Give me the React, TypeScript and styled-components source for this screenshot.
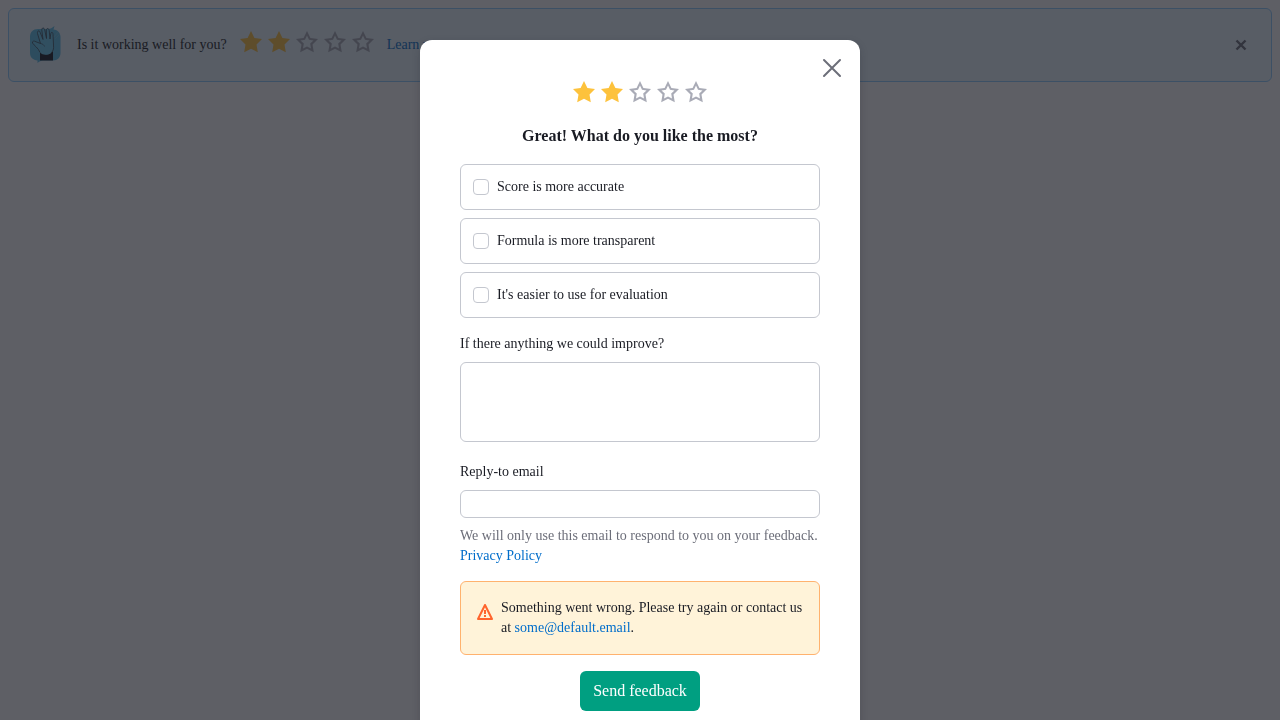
import React, { useState } from 'react';
import styled, { createGlobalStyle } from 'styled-components';

const GlobalStyle = createGlobalStyle`
  *, *::before, *::after { box-sizing: border-box; }
  body {
    margin: 8px;
    background: #ffffff;
    color: #191b23;
    font-family: "Liberation Serif", "Times New Roman", serif;
    font-size: 14px;
    line-height: 20px;
  }
`;

const Banner = styled.section`
  display: flex;
  align-items: center;
  padding: 16px;
  border: 1px solid #8ecdff;
  border-radius: 6px;
  background: #e9f7ff;
`;

const BannerContent = styled.div`
  display: flex;
  flex: 1;
  align-items: center;
  gap: 12px;
  min-width: 0;
`;

const BannerStars = styled.div`
  padding-bottom: 6px;
`;

const IconButton = styled.button`
  display: flex;
  padding: 0;
  border: 0;
  background: none;
  color: #6c6e79;
  cursor: pointer;
`;

const BannerClose = styled(IconButton)`
  padding: 0 6px;
`;

const Link = styled.a`
  color: #006dca;
  text-decoration: none;
  &:hover { text-decoration: underline; }
`;

const Overlay = styled.div`
  position: fixed;
  inset: 0;
  display: flex;
  justify-content: center;
  align-items: flex-start;
  padding: 40px;
  overflow: auto;
  scrollbar-width: none;
  background: rgba(25, 27, 35, 0.7);
`;

const Dialog = styled.div`
  position: relative;
  width: 100%;
  max-width: 440px;
  padding: 40px;
  border-radius: 12px;
  background: #ffffff;
  box-shadow: 0 3px 8px rgba(25, 27, 35, 0.2);
`;

const DialogClose = styled(IconButton)`
  position: absolute;
  top: 16px;
  right: 16px;
`;

const Form = styled.form`
  display: flex;
  flex-direction: column;
`;

const StarRow = styled.div`
  display: flex;
  justify-content: center;
  gap: 4px;
`;

const StarButton = styled(IconButton)<{ $filled: boolean }>`
  color: ${(p) => (p.$filled ? '#fdc23c' : '#a9abb6')};
`;

const Title = styled.h2`
  margin: 20px 0 16px;
  font-size: 16px;
  line-height: 24px;
  text-align: center;
`;

const Options = styled.div`
  display: grid;
  gap: 8px;
  margin-bottom: 16px;
`;

const Option = styled.label`
  display: flex;
  align-items: center;
  gap: 8px;
  min-height: 46px;
  padding: 12px;
  border: 1px solid #c4c7cf;
  border-radius: 6px;
  cursor: pointer;
`;

const Checkbox = styled.input`
  appearance: none;
  width: 16px;
  height: 16px;
  margin: 0;
  border: 1px solid #c4c7cf;
  border-radius: 4px;
  background: #ffffff;
  &:checked { background: #008ff8; border-color: #008ff8; }
`;

const FieldLabel = styled.label`
  margin-bottom: 8px;
`;

const TextArea = styled.textarea`
  display: block;
  width: 100%;
  height: 80px;
  margin-bottom: 20px;
  padding: 8px;
  border: 1px solid #c4c7cf;
  border-radius: 6px;
  background: #ffffff;
  font: inherit;
  resize: none;
`;

const TextInput = styled.input`
  width: 100%;
  height: 28px;
  margin-bottom: 8px;
  padding: 0 8px;
  border: 1px solid #c4c7cf;
  border-radius: 6px;
  background: #ffffff;
  font: inherit;
`;

const Hint = styled.p`
  margin: 0 0 15px;
  color: #6c6e79;
`;

const Warning = styled.div`
  display: flex;
  align-items: flex-start;
  gap: 8px;
  margin-bottom: 16px;
  padding: 16px;
  border: 1px solid #ffb26e;
  border-radius: 6px;
  background: #fff3d9;
`;

const WarningIcon = styled.svg`
  flex: none;
  margin-top: 6px;
`;

const WarningText = styled.p`
  margin: 0;
`;

const Submit = styled.button`
  align-self: center;
  height: 40px;
  padding: 0 13px;
  border: 0;
  border-radius: 6px;
  background: #009f81;
  color: #ffffff;
  font-family: inherit;
  font-size: 16px;
  line-height: 24px;
  cursor: pointer;
`;

const STAR = 'M12 1 15.4 7.900 23 9 17.500 14.400 18.800 22.300 12 18.700 5.200 22.300 6.500 14.400 1 9 8.600 7.900Z';
const STAR_HOLE = 'M12 5.500 14 9.700 18.500 10.400 15.200 13.600 16 18.500 12 16.400 8 18.500 8.800 13.600 5.500 10.400 10 9.700Z';

function Stars({ value, onChange }: { value: number; onChange: (n: number) => void }) {
  return (
    <StarRow role="group" aria-label="Rating">
      {[1, 2, 3, 4, 5].map((n) => (
        <StarButton key={n} type="button" $filled={n <= value} aria-label={`${n} of 5`} onClick={() => onChange(n)}>
          <svg width="24" height="24" viewBox="0 0 24 24" fill="currentColor" fillRule="evenodd" aria-hidden="true">
            <path d={n <= value ? STAR : STAR + STAR_HOLE} />
          </svg>
        </StarButton>
      ))}
    </StarRow>
  );
}

function HandIcon() {
  return (
    <svg width="40" height="40" viewBox="0 0 40 40" fill="none" aria-hidden="true">
      <path d="M13 4H23C25.500 4 27 3 29.500 1L28.500 4.500C33 5 35.500 8 35.500 12V28C35.500 32.500 32.500 35.500 28 35.500H18C16 35.500 14 36.500 12.500 38V35.500C8 35 5 32.500 5 28V12C5 7 8 4 13 4Z" fill="#5cc0e8" />
      <path d="M15 26.500C19 30.500 25 30.500 28 26V35.500H15Z" fill="#171a22" />
      <path d="M15 27.500C13.500 23 9 20.500 7.500 18C7 16 9 15.500 11 16.800L15.500 18.500L12.500 8.500C12 5.800 14.300 4.800 15.200 7.500L18 14.500L16.800 5C16.800 2.500 19 2.200 19.700 4.800L21.500 13.500L21.300 5C21.700 2.800 24 3.300 24.200 5.500L25 14L25.800 8.500C26.500 6.500 28 7.300 28 9.500L28.500 20C29 24 28 26.500 25.500 28.500C21.500 30.500 17.500 30 15 27.500Z" fill="#68c9ef" />
      <path d="M15 27.500C13.500 23 9 20.500 7.500 18C7 16 9 15.500 11 16.800L15.500 18.500L12.500 8.500C12 5.800 14.300 4.800 15.200 7.500L18 14.500L16.800 5C16.800 2.500 19 2.200 19.700 4.800L21.500 13.500L21.300 5C21.700 2.800 24 3.300 24.200 5.500L25 14L25.800 8.500C26.500 6.500 28 7.300 28 9.500L28.500 20C29 24 28 26.500 25.500 28.500" stroke="#3b4652" strokeWidth=".8" strokeLinejoin="round" />
      <path d="M15.500 18.500C17.800 18.800 19 20 19.500 21.500" stroke="#3b4652" strokeWidth=".6" />
      <path d="M29 12 33 7M30 14 35 9" stroke="#8ac4dd" strokeWidth=".6" />
    </svg>
  );
}

const reasons = ['Score is more accurate', 'Formula is more transparent', "It's easier to use for evaluation"];

export default function App() {
  const [rating, setRating] = useState(2);
  return (
    <>
      <GlobalStyle />
      <Banner aria-label="Feedback">
        <BannerContent>
          <HandIcon />
          <span>Is it working well for you?</span>
          <BannerStars>
            <Stars value={rating} onChange={setRating} />
          </BannerStars>
          <Link href="#learn">Learn more</Link>
        </BannerContent>
        <BannerClose type="button" aria-label="Close banner">
          <svg width="16" height="16" viewBox="0 0 16 16" stroke="currentColor" strokeWidth="2.400" aria-hidden="true">
            <path d="M3.500 3.500 12.500 12.500M12.500 3.500 3.500 12.500" />
          </svg>
        </BannerClose>
      </Banner>

      <Overlay>
        <Dialog role="dialog" aria-modal="true" aria-labelledby="feedback-title">
          <DialogClose type="button" aria-label="Close dialog">
            <svg width="24" height="24" viewBox="0 0 24 24" stroke="currentColor" strokeWidth="2" strokeLinecap="round" aria-hidden="true">
              <path d="M4 4 20 20M20 4 4 20" />
            </svg>
          </DialogClose>
          <Form onSubmit={(e) => e.preventDefault()}>
            <Stars value={rating} onChange={setRating} />
            <Title id="feedback-title">Great! What do you like the most?</Title>
            <Options>
              {reasons.map((reason) => (
                <Option key={reason}>
                  <Checkbox type="checkbox" />
                  <span>{reason}</span>
                </Option>
              ))}
            </Options>
            <FieldLabel htmlFor="improve">If there anything we could improve?</FieldLabel>
            <TextArea id="improve" />
            <FieldLabel htmlFor="email">Reply-to email</FieldLabel>
            <TextInput id="email" type="email" />
            <Hint>
              We will only use this email to respond to you on your feedback. <Link href="#privacy">Privacy Policy</Link>
            </Hint>
            <Warning role="alert">
              <WarningIcon width="16" height="16" viewBox="0 0 16 16" fill="none" stroke="#ff642d" strokeWidth="2" aria-hidden="true">
                <path d="M8 1 15 15H1Z" strokeLinejoin="round" />
                <path d="M8 6V10M8 11V13" />
              </WarningIcon>
              <WarningText>
                Something went wrong. Please try again or contact us at{' '}
                <Link href="mailto:some@default.email">some@default.email</Link>.
              </WarningText>
            </Warning>
            <Submit type="submit">Send feedback</Submit>
          </Form>
        </Dialog>
      </Overlay>
    </>
  );
}
